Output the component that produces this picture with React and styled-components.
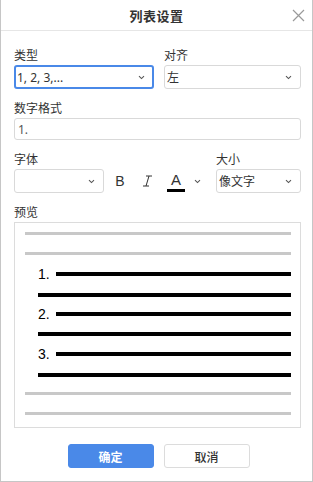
import React from "react";
import styled, { createGlobalStyle } from "styled-components";

const Global = createGlobalStyle`
  html, body { margin: 0; padding: 0; background: #fff; }
  * { box-sizing: border-box; }
`;

const FONT = `"Noto Sans", "Noto Sans CJK SC", sans-serif`;

const Dialog = styled.div`
  width: 313px;
  height: 482px;
  border: 1px solid #c6c6c6;
  border-top: none;
  background: #fff;
  display: flex;
  flex-direction: column;
  font-family: ${FONT};
  color: #333;
`;

const Header = styled.div`
  height: 31px;
  border-bottom: 1px solid #e6e6e6;
  display: grid;
  grid-template-columns: 1fr auto 1fr;
  align-items: center;
`;

const Title = styled.div`
  grid-column: 2;
  font-size: 13px;
  font-weight: 700;
  color: #333;
  letter-spacing: 0.5px;
  font-family: "Noto Sans CJK SC", sans-serif;
`;

const Close = styled.button`
  grid-column: 3;
  justify-self: end;
  margin-right: 7px;
  width: 14px;
  height: 14px;
  padding: 0;
  border: none;
  background: none;
  display: flex;
  align-items: center;
  justify-content: center;
`;

const Body = styled.div`
  flex: 1;
  display: flex;
  flex-direction: column;
  padding: 15px 11px 0 13px;
`;

const Row = styled.div`
  display: flex;
  gap: ${(p) => p.$gap ?? 10}px;
  align-items: flex-end;
  margin-top: ${(p) => p.$mt || 0}px;
`;

const Field = styled.div`
  display: flex;
  flex-direction: column;
  width: ${(p) => (p.$w ? `${p.$w}px` : "auto")};
  flex: ${(p) => (p.$w ? "none" : "1")};
`;

const Label = styled.div`
  height: 18px;
  line-height: 18px;
  font-size: 12px;
  color: #333;
  font-family: "Noto Sans CJK SC", sans-serif;
  margin-bottom: 1px;
`;

const SelectBox = styled.div`
  height: 24px;
  border: ${(p) => (p.$focus ? "2px solid #4a89e8" : "1px solid #d9d9d9")};
  border-radius: 3px;
  display: flex;
  align-items: center;
  justify-content: space-between;
  padding: 0 ${(p) => (p.$focus ? 7 : 8)}px 0 ${(p) => (p.$focus ? 1 : 2)}px;
  font-size: 12px;
  color: #333;
  background: #fff;
`;

const Input = styled.div`
  height: 22px;
  border: 1px solid #d9d9d9;
  border-radius: 3px;
  display: flex;
  align-items: center;
  padding: 0 3px;
  font-size: 12px;
  color: #555;
`;

const Tool = styled.div`
  width: ${(p) => p.$w}px;
  flex: none;
  height: 24px;
  display: flex;
  align-items: center;
  justify-content: center;
  color: #333;
`;

const Spacer = styled.div`
  flex: 1;
`;

const BoldB = styled.span`
  font-family: "Liberation Sans", sans-serif;
  font-size: 14px;
  font-weight: 400;
  color: #333;
`;

const ColorA = styled.span`
  display: inline-flex;
  flex-direction: column;
  align-items: center;
  font-family: "Liberation Sans", sans-serif;
  font-size: 15px;
  font-weight: 300;
  line-height: 14px;
  color: #333;
  padding-top: 3px;
  &::after {
    content: "";
    width: 18px;
    height: 3px;
    background: #000;
    margin-top: 2px;
  }
`;

const Preview = styled.div`
  height: 206px;
  border: 1px solid #dcdcdc;
  padding: 9px 9px 0 10px;
  display: flex;
  flex-direction: column;
`;

const Line = styled.div`
  height: ${(p) => (p.$dark ? 4 : 3)}px;
  background: ${(p) => (p.$dark ? "#000" : "#c8c8c8")};
  margin-top: ${(p) => p.$mt || 0}px;
  margin-left: ${(p) => p.$ml || 0}px;
  flex: ${(p) => (p.$grow ? 1 : "none")};
`;

const NumRow = styled.div`
  display: flex;
  align-items: center;
  margin-left: 13px;
  margin-top: ${(p) => p.$mt || 0}px;
  height: 14px;
`;

const Num = styled.span`
  font-family: "Liberation Sans", sans-serif;
  font-size: 14px;
  color: #000;
  width: 18px;
  line-height: 14px;
`;

const Footer = styled.div`
  display: flex;
  justify-content: center;
  gap: 10px;
  margin-top: 16px;
  padding-left: 2px;
`;

const Button = styled.button`
  width: 86px;
  height: 24px;
  border-radius: 3px;
  border: 1px solid ${(p) => (p.$primary ? "#4a89e8" : "#dcdcdc")};
  background: ${(p) => (p.$primary ? "#4a89e8" : "#fff")};
  color: ${(p) => (p.$primary ? "#fff" : "#333")};
  font-family: "Noto Sans CJK SC", sans-serif;
  font-size: 12px;
  font-weight: ${(p) => (p.$primary ? 700 : 500)};
  padding: 0;
`;

const Chevron = () => (
  <svg width="7" height="5" viewBox="0 0 7 5">
    <path d="M1 1.2 L3.5 3.6 L6 1.2" fill="none" stroke="#555" strokeWidth="1.1" />
  </svg>
);

const Select = ({ value, focus, ...rest }) => (
  <SelectBox $focus={focus} {...rest}>
    <span>{value}</span>
    <Chevron />
  </SelectBox>
);

export default function App() {
  return (
    <>
      <Global />
      <Dialog>
        <Header>
          <Title>列表设置</Title>
          <Close aria-label="close">
            <svg width="13" height="13" viewBox="0 0 13 13">
              <path d="M1 1 L12 12 M12 1 L1 12" stroke="#9a9a9a" strokeWidth="1.2" />
            </svg>
          </Close>
        </Header>
        <Body>
          <Row>
            <Field $w={140}>
              <Label>类型</Label>
              <Select value="1, 2, 3,..." focus />
            </Field>
            <Field>
              <Label>对齐</Label>
              <Select value="左" />
            </Field>
          </Row>
          <Row $mt={10}>
            <Field>
              <Label>数字格式</Label>
              <Input>1.</Input>
            </Field>
          </Row>
          <Row $mt={10} $gap={0}>
            <Field $w={90}>
              <Label>字体</Label>
              <Select value="" />
            </Field>
            <Tool $w={32}><BoldB>B</BoldB></Tool>
            <Tool $w={23}>
              <svg width="9" height="12" viewBox="0 0 9 12">
                <path d="M3 1 H9 M0 11 H6 M6 1 L3 11" stroke="#333" strokeWidth="1" fill="none" />
              </svg>
            </Tool>
            <Tool $w={34}><ColorA>A</ColorA></Tool>
            <Tool $w={8}><Chevron /></Tool>
            <Spacer />
            <Field $w={85}>
              <Label>大小</Label>
              <Select value="像文字" />
            </Field>
          </Row>
          <Row $mt={10}>
            <Field>
              <Label>预览</Label>
              <Preview>
                <Line />
                <Line $mt={17} />
                <NumRow $mt={12}>
                  <Num>1.</Num>
                  <Line $dark $grow />
                </NumRow>
                <Line $dark $ml={13} $mt={12} />
                <NumRow $mt={10}>
                  <Num>2.</Num>
                  <Line $dark $grow />
                </NumRow>
                <Line $dark $ml={13} $mt={11} />
                <NumRow $mt={11}>
                  <Num>3.</Num>
                  <Line $dark $grow />
                </NumRow>
                <Line $dark $ml={13} $mt={12} />
                <Line $mt={15} />
                <Line $mt={17} />
              </Preview>
            </Field>
          </Row>
          <Footer>
            <Button $primary>确定</Button>
            <Button>取消</Button>
          </Footer>
        </Body>
      </Dialog>
    </>
  );
}
